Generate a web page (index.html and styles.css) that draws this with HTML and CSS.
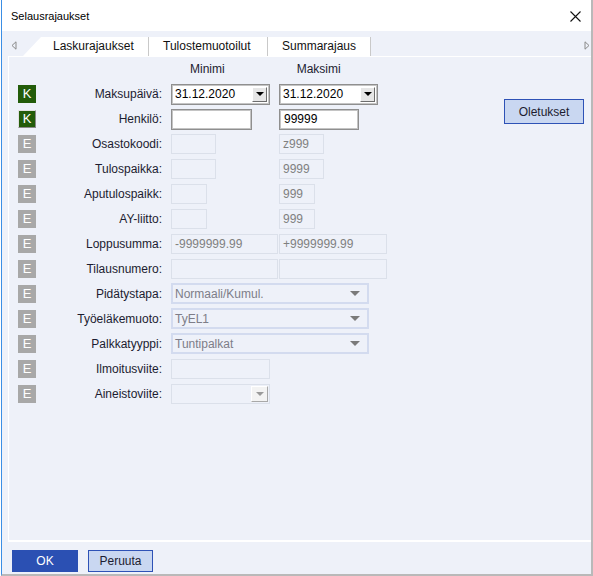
FILE: index.html
```html
<!DOCTYPE html>
<html lang="fi">
<head>
<meta charset="utf-8">
<title>Selausrajaukset</title>
<link rel="stylesheet" href="styles.css">
</head>
<body>
<div class="window">
  <div class="titlebar">
    <span class="title">Selausrajaukset</span>
    <svg class="close" width="11" height="11" viewBox="0 0 11 11"><path d="M0.5 0.5L10.5 10.5M10.5 0.5L0.5 10.5" stroke="#111" stroke-width="1.1" fill="none"/></svg>
  </div>
  <div class="tabstrip">
    <svg class="arrow-l" width="6" height="9" viewBox="0 0 6 9"><path d="M5 0.8L1 4.5L5 8.2Z" fill="none" stroke="#8a8a8a"/></svg>
    <div class="tabs">
      <div class="tab tab1">Laskurajaukset</div>
      <div class="tab tab2">Tulostemuotoilut</div>
      <div class="tab tab3">Summarajaus</div>
    </div>
    <svg class="arrow-r" width="6" height="9" viewBox="0 0 6 9"><path d="M1 0.8L5 4.5L1 8.2Z" fill="none" stroke="#8a8a8a"/></svg>
  </div>
  <div class="panel">
    <div class="form">
      <div class="head"><span class="h-min">Minimi</span><span class="h-max">Maksimi</span></div>

      <div class="row">
        <span class="badge k">K</span><span class="label">Maksupäivä:</span>
        <div class="cmin"><div class="date"><span class="val">31.12.2020</span><span class="ddbtn"><svg width="8" height="4" viewBox="0 0 8 4"><path d="M0 0H8L4 4Z" fill="#000"/></svg></span></div></div>
        <div class="cmax"><div class="date"><span class="val">31.12.2020</span><span class="ddbtn"><svg width="8" height="4" viewBox="0 0 8 4"><path d="M0 0H8L4 4Z" fill="#000"/></svg></span></div></div>
      </div>

      <div class="row">
        <span class="badge k k2">K</span><span class="label">Henkilö:</span>
        <div class="cmin"><div class="edit w81"></div></div>
        <div class="cmax"><div class="edit w80">99999</div></div>
      </div>

      <div class="row">
        <span class="badge e">E</span><span class="label">Osastokoodi:</span>
        <div class="cmin"><div class="dis w45"></div></div>
        <div class="cmax"><div class="dis w45">z999</div></div>
      </div>

      <div class="row">
        <span class="badge e">E</span><span class="label">Tulospaikka:</span>
        <div class="cmin"><div class="dis w45"></div></div>
        <div class="cmax"><div class="dis w45">9999</div></div>
      </div>

      <div class="row">
        <span class="badge e">E</span><span class="label">Aputulospaikk:</span>
        <div class="cmin"><div class="dis w36"></div></div>
        <div class="cmax"><div class="dis w36">999</div></div>
      </div>

      <div class="row">
        <span class="badge e">E</span><span class="label">AY-liitto:</span>
        <div class="cmin"><div class="dis w36"></div></div>
        <div class="cmax"><div class="dis w36">999</div></div>
      </div>

      <div class="row">
        <span class="badge e">E</span><span class="label">Loppusumma:</span>
        <div class="cmin"><div class="dis w107">-9999999.99</div></div>
        <div class="cmax"><div class="dis w108">+9999999.99</div></div>
      </div>

      <div class="row">
        <span class="badge e">E</span><span class="label">Tilausnumero:</span>
        <div class="cmin"><div class="dis w107"></div></div>
        <div class="cmax"><div class="dis w108"></div></div>
      </div>

      <div class="row">
        <span class="badge e">E</span><span class="label">Pidätystapa:</span>
        <div class="sel"><span>Normaali/Kumul.</span><svg width="10" height="5" viewBox="0 0 10 5"><path d="M0 0H10L5 5Z" fill="#7a7a7a"/></svg></div>
      </div>

      <div class="row">
        <span class="badge e">E</span><span class="label">Työeläkemuoto:</span>
        <div class="sel"><span>TyEL1</span><svg width="10" height="5" viewBox="0 0 10 5"><path d="M0 0H10L5 5Z" fill="#7a7a7a"/></svg></div>
      </div>

      <div class="row">
        <span class="badge e">E</span><span class="label">Palkkatyyppi:</span>
        <div class="sel"><span>Tuntipalkat</span><svg width="10" height="5" viewBox="0 0 10 5"><path d="M0 0H10L5 5Z" fill="#7a7a7a"/></svg></div>
      </div>

      <div class="row">
        <span class="badge e">E</span><span class="label">Ilmoitusviite:</span>
        <div class="dis w99"></div>
      </div>

      <div class="row">
        <span class="badge e">E</span><span class="label">Aineistoviite:</span>
        <div class="dis w99 withbtn"><span class="ddbtn-dis"><svg width="8" height="4" viewBox="0 0 8 4"><path d="M0 0H8L4 4Z" fill="#9a9a9a"/></svg></span></div>
      </div>
    </div>
    <div class="side">
      <button class="btn-def">Oletukset</button>
    </div>
  </div>
  <div class="footer">
    <button class="ok">OK</button>
    <button class="cancel">Peruuta</button>
  </div>
</div>
</body>
</html>
```
FILE: styles.css
```css
* { box-sizing: border-box; }
html, body { margin: 0; padding: 0; }
body {
  width: 593px;
  height: 576px;
  background: #ffffff;
  font-family: "Liberation Sans", Arial, sans-serif;
  font-size: 12px;
  color: #1c1c30;
  overflow: hidden;
}
.window {
  margin-left: 1px;
  width: 592px;
  height: 576px;
  border-left: 1px solid #3b8ee4;
  border-right: 2px solid #b9b9b9;
  border-bottom: 2px solid #b9b9b9;
  background: #eef1f9;
  display: flex;
  flex-direction: column;
}
.titlebar {
  height: 31px;
  background: #ffffff;
  display: flex;
  align-items: center;
  justify-content: space-between;
  padding: 0 10px 0 9px;
  flex: none;
}
.title { font-size: 11px; color: #000; }
.close { display: block; margin-top: 1px; }

.tabstrip {
  height: 25px;
  display: flex;
  align-items: flex-end;
  flex: none;
  position: relative;
}
.arrow-l { display: block; align-self: center; margin: 4px 0 0 9px; }
.arrow-r { display: block; align-self: center; margin: 4px 1px 0 auto; }
.tabs { display: flex; margin-left: 6px; height: 19px; }
.tab {
  height: 19px;
  background: #ffffff;
  border-right: 1px solid #c9c9c9;
  color: #111;
  font-size: 12px;
  line-height: 19px;
  white-space: nowrap;
}
.tab1 { width: 126px; padding-left: 30px; clip-path: polygon(18px 0, 100% 0, 100% 100%, 0 100%); }
.tab2 { width: 119px; padding-left: 14px; }
.tab3 { width: 103px; padding-left: 14px; }

.panel {
  flex: none;
  height: 486px;
  margin-left: 6px;
  border-left: 1px solid #ffffff;
  border-top: 1px solid #ffffff;
  border-bottom: 2px solid #ffffff;
  background: #eef1f9;
  display: flex;
}
.form { flex: 1; }
.head { height: 24px; display: flex; align-items: center; color: #1c1c30; }
.h-min { margin-left: 181px; }
.h-max { margin-left: 72px; }

.row { height: 25px; display: flex; align-items: center; }
.badge {
  width: 18px;
  height: 18px;
  margin-left: 9px;
  color: #fff;
  font-size: 13px;
  line-height: 18px;
  text-align: center;
  flex: none;
}
.badge.k { background: #235c0a; }
.badge.k2 { border: 1px solid; border-color: #e0e0e0 #8a8a8a #8a8a8a #e0e0e0; line-height: 16px; }
.badge.e { background: #a8a8a8; }
.label { width: 126px; text-align: right; margin-right: 9px; flex: none; white-space: nowrap; }
.cmin { width: 108px; flex: none; display: flex; }
.cmax { flex: none; display: flex; }

.date {
  width: 99px;
  height: 21px;
  background: #fff;
  border: 1px solid #8f8f8f;
  box-shadow: inset 0 0 0 1px #c4c4c4;
  display: flex;
  align-items: center;
  padding-left: 3px;
  color: #000;
  margin-top: 1px;
}
.date .val { flex: 1; }
.ddbtn {
  width: 15px;
  height: 15px;
  margin-right: 2px;
  background: #e6e6e6;
  border: 1px solid;
  border-color: #ffffff #6d6d6d #6d6d6d #ffffff;
  display: flex;
  align-items: center;
  justify-content: center;
}
.ddbtn svg { display: block; }
.edit {
  height: 21px;
  background: #fff;
  border: 1px solid #8f8f8f;
  box-shadow: inset 0 0 0 1px #c4c4c4;
  padding-left: 4px;
  line-height: 19px;
  color: #000;
  margin-top: 1px;
}
.w81 { width: 81px; }
.w80 { width: 80px; }
.dis {
  height: 20px;
  border: 1px solid #dbe0ea;
  background: #eef1f9;
  color: #808080;
  padding-left: 3px;
  line-height: 18px;
  flex: none;
}
.w45 { width: 45px; }
.w36 { width: 36px; }
.w107 { width: 107px; }
.w108 { width: 108px; }
.w99 { width: 99px; }
.withbtn { display: flex; justify-content: flex-end; align-items: center; padding-right: 1px; }
.ddbtn-dis {
  width: 17px;
  height: 16px;
  background: #f3f3f3;
  border: 1px solid;
  border-color: #fff #a8a8a8 #a8a8a8 #fff;
  display: flex;
  align-items: center;
  justify-content: center;
}
.ddbtn-dis svg { display: block; }
.sel {
  width: 198px;
  height: 21px;
  border: 2px solid #d3dbef;
  background: #eef1f9;
  color: #7d7d88;
  display: flex;
  align-items: center;
  justify-content: space-between;
  padding: 0 7px 0 2px;
  flex: none;
}
.sel svg { display: block; }

.side { flex: none; }
.btn-def {
  margin: 42px 7px 0 0;
  width: 80px;
  height: 25px;
  background: #c9d7f1;
  border: 1px solid #2e52b6;
  font-family: "Liberation Sans", Arial, sans-serif;
  font-size: 12px;
  color: #1c1c30;
  padding: 0;
}
.footer {
  flex: none;
  display: flex;
  padding: 8px 0 0 10px;
  gap: 10px;
}
.footer button {
  height: 22px;
  font-family: "Liberation Sans", Arial, sans-serif;
  font-size: 12px;
  padding: 0;
}
.ok { width: 66px; background: #2b50b3; border: 1px solid #2b50b3; color: #fff; }
.cancel { width: 65px; background: #c9d7f1; border: 1px solid #2e52b6; color: #1c1c30; }
```
